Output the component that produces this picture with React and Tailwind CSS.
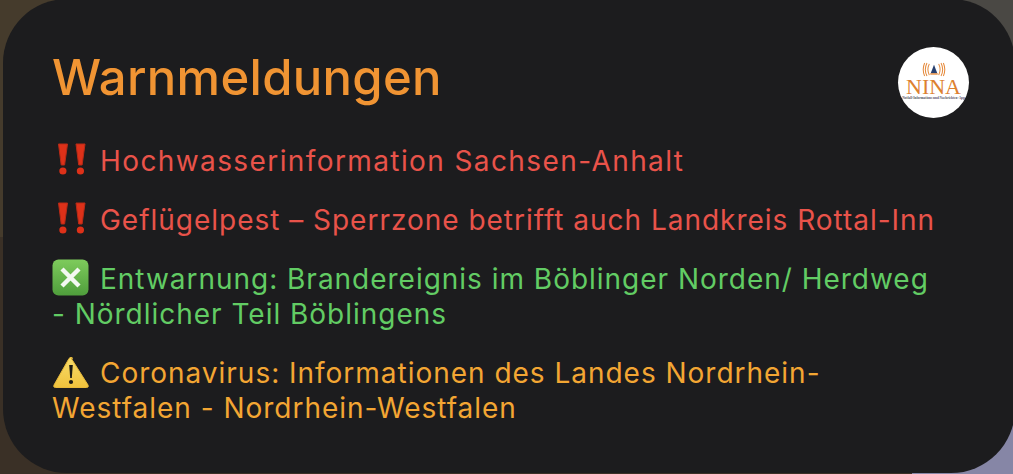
import React from "react";

function Bangs() {
  return (
    <svg width="34" height="34" viewBox="0 0 34 34" className="inline-block -my-[10px] align-[5px] mr-[14px]">
      <path d="M6.5 2 H15.5 L12.6 23 H9.2 Z" fill="#dd3119" stroke="#b92a16" strokeWidth="1" strokeLinejoin="round" />
      <circle cx="10.9" cy="29" r="3.6" fill="#dd3119" />
      <path d="M24 2 H33 L30.1 23 H26.7 Z" fill="#dd3119" stroke="#b92a16" strokeWidth="1" strokeLinejoin="round" />
      <circle cx="28.4" cy="29" r="3.6" fill="#dd3119" />
    </svg>
  );
}

function CrossBox() {
  return (
    <svg width="37" height="37" viewBox="0 0 37 37" className="inline-block -my-[10px] align-[3px] mr-[11px]">
      <defs>
        <linearGradient id="cross-bg" x1="0" y1="0" x2="0" y2="1">
          <stop offset="0" stopColor="#7ecb5c" />
          <stop offset="1" stopColor="#4f9e3c" />
        </linearGradient>
      </defs>
      <rect x="0.5" y="0.5" width="36" height="36" rx="6" fill="url(#cross-bg)" />
      <path d="M10 10 L27 27 M27 10 L10 27" stroke="#f4f8f2" strokeWidth="4.4" />
    </svg>
  );
}

function WarnSign() {
  return (
    <svg width="38" height="34" viewBox="0 0 38 34" className="inline-block -my-[10px] align-[4px] mr-[10px]">
      <defs>
        <linearGradient id="warn-bg" x1="0" y1="0" x2="0" y2="1">
          <stop offset="0" stopColor="#f8dc6a" />
          <stop offset="1" stopColor="#f0c23c" />
        </linearGradient>
      </defs>
      <path d="M19 3 L36 30 Q37 32.5 34.5 32.5 H3.5 Q1 32.5 2 30 L17 3.5 Q19 1 21 3.5" fill="url(#warn-bg)" stroke="#e8b93a" strokeWidth="1" strokeLinejoin="round" />
      <path d="M17.2 10 H20.8 L19.8 23 H18.2 Z" fill="#1c1a14" />
      <circle cx="19" cy="27" r="2.1" fill="#1c1a14" />
    </svg>
  );
}

function NinaLogo() {
  return (
    <div className="w-[71px] h-[71px] rounded-full bg-white flex flex-col items-center pt-[15px] shrink-0">
      <svg width="24" height="15" viewBox="0 0 24 16" fill="none">
        <path d="M7 2 Q4 8 7 14 M4.5 1 Q1 8 4.5 15 M2 1 Q-1 8 2 15" stroke="#e58a3c" strokeWidth="1.1" />
        <path d="M17 2 Q20 8 17 14 M19.5 1 Q23 8 19.5 15 M22 1 Q25 8 22 15" stroke="#e58a3c" strokeWidth="1.1" />
        <path d="M12 3 L15.5 12 H8.5 Z" fill="#28406e" />
        <rect x="8" y="12" width="8" height="1.5" fill="#e58a3c" />
      </svg>
      <div className="font-['Liberation_Serif',serif] text-[22px] leading-[19px] text-[#dd8130] font-normal">NINA</div>
      <div className="font-['Liberation_Serif',serif] text-[3.4px] leading-[4px] text-[#555566] font-bold whitespace-nowrap">Notfall-Informations und Nachrichten-App</div>
    </div>
  );
}

export default function App() {
  return (
    <div className="w-[1013px] h-[474px] overflow-hidden bg-[conic-gradient(at_90%_50%,#4a4844_0deg_90deg,#8686a6_90deg_180deg,#3a3026_180deg_270deg,#453b2c_270deg_360deg)] font-['Inter',sans-serif]">
      <div className="ml-[3px] -mt-[1px] w-[1012px] h-[474px] rounded-[64px] bg-[#1c1c1e] pl-[49px] pt-[48px]">
        <div className="w-[917px] flex justify-between items-start">
          <h1 className="pt-[3px] text-[49px] leading-[56px] font-medium text-[#f09433] tracking-[0.3px]">Warnmeldungen</h1>
          <NinaLogo />
        </div>
        <div className="mt-[26px] w-[888px] text-[28px] leading-[35px] tracking-[0.98px] flex flex-col gap-[24px]">
          <p className="text-[#e9534a] tracking-[1.4px]"><Bangs />Hochwasserinformation Sachsen-Anhalt</p>
          <p className="text-[#e9534a]"><Bangs />Geflügelpest – Sperrzone betrifft auch Landkreis Rottal-Inn</p>
          <p className="text-[#62cc64]"><CrossBox />Entwarnung: Brandereignis im Böblinger Norden/ Herdweg - Nördlicher Teil Böblingens</p>
          <p className="text-[#f3a633]"><WarnSign />Coronavirus: Informationen des Landes Nordrhein-Westfalen - Nordrhein-Westfalen</p>
        </div>
      </div>
    </div>
  );
}
